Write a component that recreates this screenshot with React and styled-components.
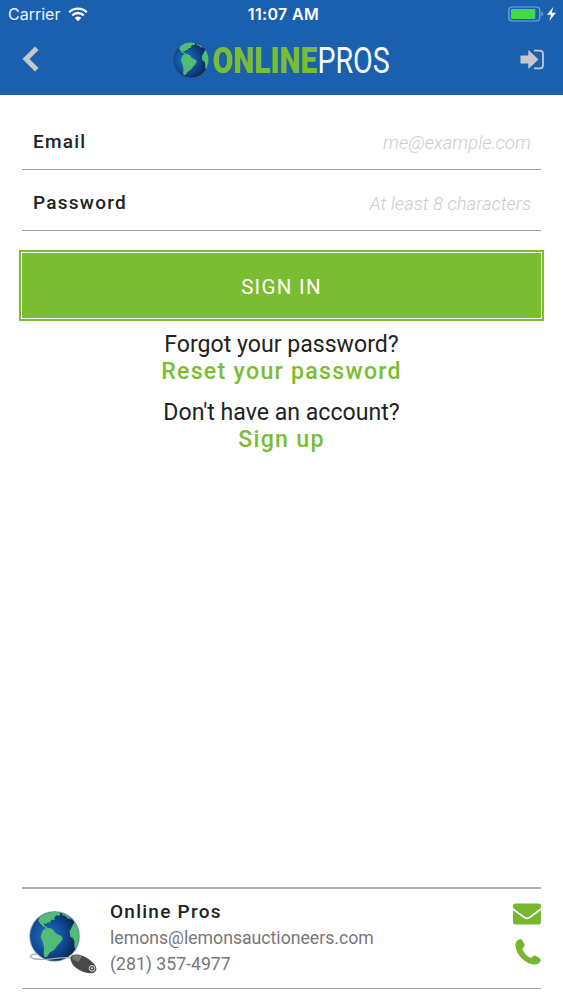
import styled, { createGlobalStyle } from "styled-components"
import { FaEnvelope } from "react-icons/fa"

const GlobalStyle = createGlobalStyle`
    * {
        box-sizing: border-box;
    }
    body {
        margin: 0;
        background: #ffffff;
        font-family: Roboto, "Liberation Sans", sans-serif;
    }
`

const Screen = styled.div`
    width: 563px;
    height: 1000px;
    display: flex;
    flex-direction: column;
    overflow: hidden;
    background: #ffffff;
    color: #222222;
`

const Header = styled.header`
    height: 95px;
    flex: none;
    background: #1b60ae;
`

const StatusBar = styled.div`
    height: 28px;
    padding: 0 6px 0 8px;
    display: grid;
    grid-template-columns: 1fr auto 1fr;
    align-items: center;
    color: #ffffff;
    font-family: Inter, sans-serif;
    font-size: 16px;
    line-height: 28px;
`

const Carrier = styled.div`
    display: flex;
    align-items: center;
    gap: 8px;
    color: #e9f3ff;
`

const Time = styled.div`
    padding-left: 2px;
    font-weight: 600;
    letter-spacing: 0.35px;
`

const Power = styled.div`
    display: flex;
    justify-content: flex-end;
    align-items: center;
`

const NavBar = styled.nav`
    height: 67px;
    padding: 0 17px 0 22px;
    display: flex;
    align-items: flex-start;
    justify-content: space-between;
`

const NavButton = styled.button`
    border: none;
    padding: ${(props) => props.$top} 0 0;
    background: none;
    display: flex;
`

const Logo = styled.div`
    padding-top: 12px;
    margin-left: 6px;
    display: flex;
`

const Form = styled.form`
    padding: 14px 22px 0;
    display: flex;
    flex-direction: column;
`

const Field = styled.label`
    height: 61px;
    padding: 5px 10px 0 11px;
    display: flex;
    align-items: center;
    justify-content: space-between;
    border-bottom: 1px solid #a0a0a3;
`

const Label = styled.span`
    font-size: 19px;
    font-weight: 500;
    letter-spacing: 1.25px;
`

const Input = styled.input`
    width: 260px;
    border: none;
    padding: 2px 0 0;
    outline: none;
    background: transparent;
    text-align: right;
    font-family: inherit;
    font-size: 18.5px;
    font-weight: 300;
    font-style: italic;

    &::placeholder {
        color: #cbcbcf;
        opacity: 1;
    }
`

const Button = styled.button`
    height: 71px;
    margin: 19px -3px 0;
    padding: 2px;
    border: none;
    background: #7bbd32;
    display: flex;
`

const ButtonFace = styled.span`
    flex: 1;
    align-self: stretch;
    display: flex;
    align-items: center;
    justify-content: center;
    padding-top: 2px;
    border: 1.5px solid #ffffff;
    color: #ffffff;
    font-family: Roboto, sans-serif;
    font-size: 20.5px;
    letter-spacing: 1.3px;
`

const Help = styled.div`
    padding-top: ${(props) => props.$top};
    display: flex;
    flex-direction: column;
    align-items: center;
    font-size: 23.1px;
    line-height: 27px;
`

const HelpLink = styled.a`
    color: #7bbd32;
    font-weight: 500;
    letter-spacing: 1.3px;
`

const Footer = styled.footer`
    height: 102px;
    margin: auto 22px 11px;
    padding: 0 0 0 4px;
    display: flex;
    border-top: 2px solid #b0b0b2;
    border-bottom: 1px solid #a0a0a3;
`

const Avatar = styled.div`
    width: 84px;
    padding-top: 18px;
`

const Contact = styled.div`
    flex: 1;
    padding-top: 10px;
    color: #77777a;
    font-size: 17.67px;
    line-height: 26px;
`

const Name = styled.div`
    color: #222222;
    font-size: 19px;
    font-weight: 500;
    letter-spacing: 1.25px;
`

const Actions = styled.div`
    padding-top: 11px;
    display: flex;
    flex-direction: column;
    align-items: flex-end;
    gap: 11px;
    color: #76b72d;
`

const Globe = ({ id, rim }) => (
    <g>
        <defs>
            <radialGradient id={id} cx="0.36" cy="0.5" r="0.62">
                <stop offset="0" stopColor="#1a78bd" />
                <stop offset="0.5" stopColor="#11509a" />
                <stop offset="1" stopColor="#0a2454" />
            </radialGradient>
            <clipPath id={id + "-clip"}>
                <circle cx="25" cy="25" r="24.5" />
            </clipPath>
        </defs>
        <circle cx="25" cy="25" r="25.4" fill={rim} />
        <circle cx="25" cy="25" r="24.5" fill={`url(#${id})`} />
        <g clipPath={`url(#${id}-clip)`} fill="#52bb78">
            <path d="M8.5 9.5 L11 4 L16 1 L24 0 L31 1 L30 4.6 L27 4 L24.5 6.5 L25.5 8.5 L21.7 8.5 L20.4 11.2 L17.5 11.2 L17 12.8 L14.5 12 L14.5 14 L18 16.5 L17 17.3 L12.5 14.5 L10 11.5 Z" />
            <path d="M32 2 L38 4 L42 8.5 L38 7 L36 4.8 L33 4 Z" />
            <path d="M14.5 17.8 L17 16.6 L21 17 L24 19 L26 22 L32 25 L33.2 27.6 L30.5 31.5 L28 34 L25 38.2 L20 41.5 L17.5 45.5 L15 46 L14 43 L14.5 36.8 L13 30.3 L11 26 L12.5 20.4 Z" />
            <path d="M45 10.5 L48 11 L52 19 L52 30 L49 36 L46.5 39.5 L45 37 L44.7 30 L43.5 27 L40.8 25.5 L40 20.5 L42.8 14.5 Z" />
        </g>
    </g>
)

const Wifi = () => (
    <svg width="20" height="15" viewBox="0 0 20 15">
        <path d="M1.2 5.2 A12.6 12.6 0 0 1 18.8 5.2" fill="none" stroke="#fff" strokeWidth="2.3" />
        <path d="M4.3 8.3 A8.2 8.2 0 0 1 15.7 8.3" fill="none" stroke="#fff" strokeWidth="2.3" />
        <path d="M6.8 10.9 A4.7 4.7 0 0 1 13.2 10.9 L10 14.2 Z" fill="#fff" />
    </svg>
)

const Battery = () => (
    <svg width="49" height="18" viewBox="0 0 49 18">
        <rect x="0.8" y="2" width="31" height="14" rx="3.5" fill="none" stroke="#75a9de" strokeWidth="1.2" />
        <rect x="2.8" y="4" width="24.5" height="10" rx="1" fill="#43d650" />
        <path d="M33.5 6.5 C35.5 7.2 35.5 10.8 33.5 11.5 Z" fill="#75a9de" />
        <path d="M45.2 2 L39 9.8 H43 L41.3 16 L48 7.8 H43.8 Z" fill="#fff" />
    </svg>
)

const Back = () => (
    <svg width="18" height="26" viewBox="0 0 18 26">
        <path d="M14.8 2.2 L4 13 L14.8 23.8" fill="none" stroke="#c5c7cb" strokeWidth="5" />
    </svg>
)

const SignIn = () => (
    <svg width="26" height="22" viewBox="0 0 26 22">
        <path d="M0.5 6.5 H8.3 V1 L18.5 10.5 L8.3 20 V14.5 H0.5 Z" fill="#c5c7cb" />
        <path d="M14 1.6 H19.5 Q23 1.6 23 5 V16 Q23 19.4 19.5 19.4 H14" fill="none" stroke="#c5c7cb" strokeWidth="1.8" />
    </svg>
)

const Phone = () => (
    <svg width="26" height="26" viewBox="0 0 26 26">
        <path
            d="M4.2 0.5 C5.8 0 6.8 0.5 7.5 1.8 L9.4 5.2 C10 6.4 9.6 7.4 8.5 8.4 C7.5 9.2 7.2 9.8 7.7 11 C9.2 14.2 11.9 17 15 18.5 C16.2 19 16.8 18.6 17.7 17.6 C18.6 16.5 19.6 16.2 20.8 16.9 L24.1 18.8 C25.5 19.6 26 20.7 25.5 22 C24.6 24.2 22.5 25.6 20 25.6 C10.5 25.2 0.7 15.5 0.4 6 C0.4 3.4 1.9 1.3 4.2 0.5 Z"
            fill="currentColor"
        />
    </svg>
)

const BrandLogo = () => (
    <svg width="222" height="42" viewBox="0 0 222 42" overflow="visible">
        <g transform="translate(1 2) scale(0.72)">
            <Globe id="logo-globe" rim="#2c5f94" />
        </g>
        <text x="40.6" y="33" fill="#7bbd32" fontFamily="Roboto" fontWeight="900" fontSize="36" textLength="104.6" lengthAdjust="spacingAndGlyphs">
            ONLINE
        </text>
        <text x="145.4" y="33" fill="#f4faff" fontFamily="Roboto" fontWeight="400" fontSize="36" textLength="72.4" lengthAdjust="spacingAndGlyphs">
            PROS
        </text>
    </svg>
)

const CompanyMark = () => (
    <svg width="72" height="68" viewBox="0 0 72 68">
        <g transform="translate(3.6 4.3)">
            <Globe id="company-globe" rim="#a3b0bc" />
        </g>
        <path d="M12 47 C4 47 2 50 7 51.5 C20 55 32 49 46 51" fill="none" stroke="#a9adb2" strokeWidth="1.3" />
        <path d="M46 48.5 C51 46 59 49 65 54 C71 59 72 63 68 65.5 C62 68 51 63 47 58 C44.5 54 43.5 50 46 48.5 Z" fill="#48494b" />
        <path d="M47 48.5 C50 47.3 53 48 56 49.3 L52.5 55 L46 52 Z" fill="#737577" />
        <circle cx="66" cy="61.3" r="2.8" fill="#48494b" stroke="#e2e2e2" strokeWidth="1" />
        <circle cx="66" cy="61.3" r="1" fill="#e2e2e2" />
    </svg>
)

const App = () => {
    return (
        <>
            <GlobalStyle />
            <Screen>
                <Header>
                    <StatusBar>
                        <Carrier>
                            Carrier
                            <Wifi />
                        </Carrier>
                        <Time>11:07 AM</Time>
                        <Power>
                            <Battery />
                        </Power>
                    </StatusBar>
                    <NavBar>
                        <NavButton $top="18px" aria-label="Back">
                            <Back />
                        </NavButton>
                        <Logo>
                            <BrandLogo />
                        </Logo>
                        <NavButton $top="21px" aria-label="Sign in">
                            <SignIn />
                        </NavButton>
                    </NavBar>
                </Header>
                <Form onSubmit={(e) => e.preventDefault()}>
                    <Field>
                        <Label>Email</Label>
                        <Input type="email" placeholder="me@example.com" />
                    </Field>
                    <Field>
                        <Label>Password</Label>
                        <Input type="password" placeholder="At least 8 characters" />
                    </Field>
                    <Button>
                        <ButtonFace>SIGN IN</ButtonFace>
                    </Button>
                </Form>
                <Help $top="10px">
                    <span>Forgot your password?</span>
                    <HelpLink>Reset your password</HelpLink>
                </Help>
                <Help $top="14px">
                    <span>Don't have an account?</span>
                    <HelpLink>Sign up</HelpLink>
                </Help>
                <Footer>
                    <Avatar>
                        <CompanyMark />
                    </Avatar>
                    <Contact>
                        <Name>Online Pros</Name>
                        <div>lemons@lemonsauctioneers.com</div>
                        <div>(281) 357-4977</div>
                    </Contact>
                    <Actions>
                        <FaEnvelope size={28} />
                        <Phone />
                    </Actions>
                </Footer>
            </Screen>
        </>
    )
}

export default App
